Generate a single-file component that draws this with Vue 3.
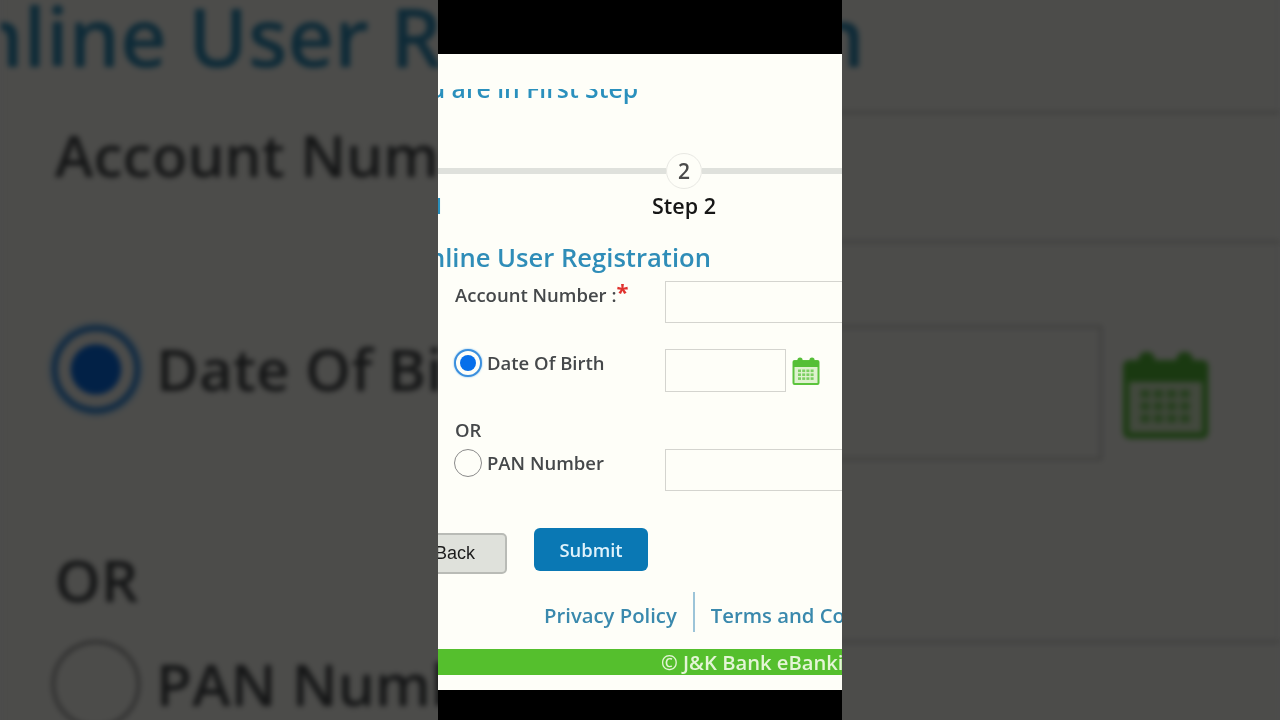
<script setup>
const layers = ['backdrop', 'front']
const cells = []
for (let r = 0; r < 3; r++) for (let c = 0; c < 4; c++) cells.push({ x: 7 + c * 4.2, y: 13.5 + r * 3.9, key: r + '-' + c })
</script>

<template>
  <div class="stage">
    <template v-for="layer in layers" :key="layer">
      <div :class="layer === 'front' ? 'phone' : 'backdrop'">
        <div class="screen">
          <div class="first-clip"><div class="first">You are in First Step</div></div>
          <div class="stepper">
            <span class="line left"></span>
            <span class="circle">2</span>
            <span class="line"></span>
          </div>
          <div class="step-labels">
            <span class="step-one"><span>Step 1</span></span>
            <span class="step-two">Step 2</span>
          </div>
          <div class="title"><span>Online User Registration</span></div>
          <div class="form">
            <div class="row account">
              <div class="label">Account Number :<span class="star">*</span></div>
              <div class="input wide"></div>
            </div>
            <div class="row dob">
              <div class="choice">
                <span class="radio on"><i></i></span>
                <span class="label">Date Of Birth</span>
              </div>
              <div class="input short"></div>
              <svg class="cal" viewBox="0 0 30 30" width="30" height="30">
                <rect x="2.5" y="5" width="25" height="23" rx="1" fill="#dff2cf" stroke="#5cc43d" stroke-width="2" />
                <rect x="2" y="5" width="26" height="6" fill="#56bf37" />
                <circle cx="9" cy="4" r="2.6" fill="#56bf37" />
                <circle cx="21" cy="4" r="2.6" fill="#56bf37" />
                <rect v-for="cell in cells" :key="cell.key" :x="cell.x" :y="cell.y" width="3" height="2.6" fill="#7ccf62" />
              </svg>
            </div>
            <div class="or">OR</div>
            <div class="row pan">
              <div class="choice">
                <span class="radio"></span>
                <span class="label">PAN Number</span>
              </div>
              <div class="input wide"></div>
            </div>
          </div>
          <div class="buttons">
            <div class="back">Back</div>
            <div class="submit">Submit</div>
          </div>
          <div class="links">
            <span class="link">Privacy Policy</span>
            <span class="divider"></span>
            <span class="link">Terms and Conditions</span>
          </div>
          <div class="copyright">© J&amp;K Bank eBanking</div>
        </div>
      </div>
    </template>
  </div>
</template>

<style>
html, body { margin: 0; background: #4c4c4c; }
</style>

<style scoped>
.stage {
  position: relative;
  width: 1280px;
  height: 720px;
  overflow: hidden;
  background: #4c4c4c;
  display: flex;
  justify-content: center;
  font-family: "Open Sans", "Liberation Sans", sans-serif;
}
.backdrop {
  position: absolute;
  left: 0;
  top: 0;
  width: 404px;
  height: 636px;
  transform-origin: 0 0;
  transform: translate(1px, -604px) scale(3.165, 3.15);
  filter: brightness(0.3) blur(0.9px);
}
.phone {
  position: relative;
  width: 404px;
  height: 720px;
  padding: 54px 0 30px;
  box-sizing: border-box;
  background: #000;
}
.screen {
  width: 404px;
  height: 636px;
  overflow: hidden;
  background: #fefef8;
  filter: blur(0.5px);
}
.first-clip {
  height: 15px;
  margin-top: 35px;
  width: 200px;
  overflow: hidden;
  display: flex;
  justify-content: flex-end;
  align-items: flex-end;
}
.first {
  white-space: nowrap;
  flex: none;
  font-size: 24.7px;
  line-height: 30px;
  font-weight: 600;
  color: #2a90bd;
}
.stepper {
  margin-top: 49px;
  height: 36px;
  display: flex;
  align-items: center;
}
.line {
  flex: 1;
  height: 6px;
  background: #dfe1dc;
}
.line.left {
  flex: none;
  width: 228px;
}
.circle {
  flex: none;
  width: 36px;
  height: 36px;
  box-sizing: border-box;
  border: 1px solid #e8e8e3;
  border-radius: 50%;
  background: #fefef8;
  display: flex;
  align-items: center;
  justify-content: center;
  font-size: 21px;
  font-weight: 600;
  color: #4a4a4a;
}
.step-labels {
  margin-top: 3px;
  height: 28px;
  display: flex;
  align-items: center;
}
.step-one {
  flex: none;
  width: 3px;
  overflow: hidden;
  display: flex;
  justify-content: flex-end;
  color: #2a90bd;
  font-size: 21px;
  font-weight: 600;
}
.step-one span { flex: none; white-space: nowrap; margin-right: -3px; }
.step-two {
  margin-left: 211px;
  font-size: 21.5px;
  font-weight: 600;
  line-height: 28px;
  color: #161616;
}
.title {
  margin-top: 20px;
  height: 34px;
  width: 273px;
  display: flex;
  justify-content: flex-end;
  align-items: center;
}
.title span {
  flex: none;
  white-space: nowrap;
  font-size: 25.6px;
  font-weight: 600;
  color: #2f8db8;
}
.form {
  margin-top: 7px;
  padding-left: 17px;
}
.row {
  display: flex;
  align-items: flex-start;
}
.account, .pan { height: 42px; }
.dob { height: 43px; margin-top: 26px; }
.pan { margin-top: 7px; }
.label {
  flex: none;
  font-size: 18.5px;
  line-height: 28px;
  font-weight: 600;
  color: #45484a;
  white-space: nowrap;
}
.account .label { width: 210px; }
.star {
  color: #e0322e;
  font-size: 22px;
  font-weight: 700;
  line-height: 20px;
  vertical-align: 2px;
}
.choice {
  flex: none;
  width: 211px;
  display: flex;
  align-items: center;
  gap: 5px;
  margin-left: -1px;
}
.radio {
  flex: none;
  width: 28px;
  height: 28px;
  box-sizing: border-box;
  border: 1.5px solid #8a8a8a;
  border-radius: 50%;
  background: #fefef8;
  display: flex;
  align-items: center;
  justify-content: center;
}
.radio.on {
  border: 2px solid #3b8fdd;
  box-shadow: 0 0 2px #6fb6f0;
}
.radio.on i {
  display: block;
  width: 16px;
  height: 16px;
  border-radius: 50%;
  background: #076fea;
}
.input {
  box-sizing: border-box;
  border: 1.5px solid #d4d4cf;
  background: #fefef8;
  height: 100%;
}
.wide { width: 240px; flex: none; }
.short { width: 121px; flex: none; }
.cal {
  flex: none;
  margin: 7px 0 0 5px;
}
.or {
  margin-top: 26px;
  height: 24px;
  line-height: 24px;
  font-size: 18.5px;
  font-weight: 600;
  color: #45484a;
}
.buttons {
  margin-top: 37px;
  height: 43px;
  display: flex;
  align-items: flex-start;
}
.back {
  flex: none;
  margin: 5px 0 0 -31px;
  width: 100px;
  height: 41px;
  box-sizing: border-box;
  border: 2px solid #b9bbb6;
  border-radius: 5px;
  background: #dfe1db;
  display: flex;
  justify-content: flex-end;
  align-items: center;
  padding-right: 30px;
  font-family: "Liberation Sans", Arial, sans-serif;
  font-size: 18px;
  color: #1c1c1c;
}
.submit {
  flex: none;
  margin-left: 27px;
  width: 114px;
  height: 43px;
  border-radius: 6px;
  background: #0a78b4;
  display: flex;
  justify-content: center;
  align-items: center;
  color: #dff2fb;
  font-size: 18.4px;
  font-weight: 600;
}
.links {
  margin: 21px 0 0 106px;
  height: 40px;
  display: flex;
  align-items: center;
  gap: 16px;
  white-space: nowrap;
  font-size: 20.3px;
  font-weight: 600;
  color: #3a89ad;
}
.link { margin-top: 5px; }
.divider {
  flex: none;
  width: 2px;
  height: 40px;
  background: #9cc4d8;
}
.copyright {
  margin-top: 17px;
  height: 26px;
  line-height: 26px;
  padding-left: 223px;
  white-space: nowrap;
  background: #55bf2d;
  color: #e4f5d6;
  font-size: 20.2px;
  font-weight: 600;
}
</style>
